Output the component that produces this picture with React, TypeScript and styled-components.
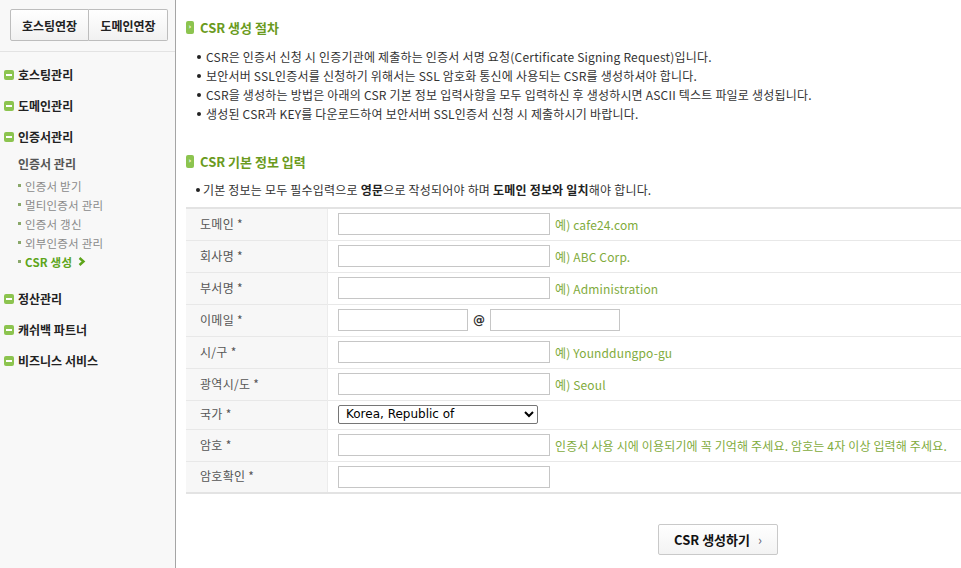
import React, { FC } from 'react';
import styled, { createGlobalStyle } from 'styled-components';

const GlobalStyle = createGlobalStyle`
    html, body { margin: 0; padding: 0; background: #fff; overflow: hidden; }
    body { font-family: "Noto Sans CJK KR", "Noto Sans", sans-serif; font-size: 12px; color: #333; }
`;

const Page = styled.div`
    display: flex;
    width: 1264px;
    height: 568px;
`;

const Sidebar = styled.aside`
    width: 175px;
    flex: none;
    background: #f8f8f8;
    border-right: 1px solid #a5a5a5;
`;

const TopButtons = styled.div`
    display: flex;
    padding: 9px 0 10px 10px;
    border-bottom: 1px solid #e3e3e3;
`;

const TopButton = styled.button`
    width: 79px;
    height: 32px;
    padding: 0;
    border: 1px solid #bdbdbd;
    background: linear-gradient(#ffffff, #f1f1f1);
    font: 700 12px "Noto Sans CJK KR", sans-serif;
    color: #222;
    &:first-child { border-radius: 2px 0 0 2px; }
    &:last-child { border-left: none; border-radius: 0 2px 2px 0; }
`;

const Menu = styled.ul<{ $first?: boolean }>`
    list-style: none;
    margin: 0;
    padding: ${p => (p.$first ? 7 : 0)}px 0 0 4px;
`;

const MenuItem = styled.li`
    height: 31px;
    display: flex;
    align-items: center;
    gap: 4px;
    font-weight: 700;
    font-size: 12px;
    color: #222;
`;

const MinusIcon = styled.i`
    width: 10px;
    height: 10px;
    border-radius: 2px;
    background: #8cc44f;
    display: flex;
    align-items: center;
    justify-content: center;
    &::after { content: ''; width: 6px; height: 2px; background: #fff; }
`;

const SubMenu = styled.div`
    padding: 2px 0 0 18px;
    margin-bottom: 12px;
`;

const SubTitle = styled.div`
    height: 22px;
    line-height: 20px;
    font-size: 12px;
    font-weight: 700;
    color: #555;
`;

const SubItem = styled.div<{ $active?: boolean }>`
    height: 19px;
    display: flex;
    align-items: center;
    gap: 4px;
    font-size: 11.5px;
    letter-spacing: 0.2px;
    font-weight: ${p => (p.$active ? 700 : 400)};
    color: ${p => (p.$active ? '#5da51a' : '#8a8a8a')};
    &::before { content: ''; width: 3px; height: 3px; background: #8aa86a; }
    svg { margin-left: 2px; }
`;

const Main = styled.main`
    flex: 1;
    padding: 17px 14px 0 10px;
`;

const Heading = styled.h3`
    display: flex;
    align-items: center;
    gap: 6px;
    margin: 0;
    height: 20px;
    font: 700 13px "Noto Sans CJK KR", sans-serif;
    color: #6a9a20;
`;

const HeadIcon = styled.i`
    width: 8px;
    height: 13px;
    border-radius: 2px;
    background: #8cc44f;
    color: #fff;
    font: 700 7px "DejaVu Sans", sans-serif;
    display: flex;
    align-items: center;
    justify-content: center;
    font-style: normal;
    &::after { content: '›'; }
`;

const Bullets = styled.ul<{ $note?: boolean }>`
    list-style: none;
    margin: ${p => (p.$note ? '9px 0 8px' : '10px 0 28px')};
    padding: 0 0 0 ${p => (p.$note ? 10 : 11)}px;
    li {
        position: relative;
        line-height: 19px;
        font-size: 12px;
        letter-spacing: 0.2px;
        color: #333;
        padding-left: ${p => (p.$note ? 7 : 9)}px;
    }
    li::before {
        content: '';
        position: absolute;
        left: 0;
        top: 8px;
        width: 4px;
        height: 4px;
        border-radius: 50%;
        background: #222;
    }
    b { color: #222; }
`;

const FormTable = styled.table`
    width: 100%;
    border-collapse: collapse;
    border-top: 2px solid #e3e3e3;
    border-bottom: 2px solid #e3e3e3;
`;

const Row = styled.tr<{ $short?: boolean }>`
    height: ${p => (p.$short ? 29 : 32)}px;
    & + & { border-top: 1px solid #e8e8e8; }
`;

const Label = styled.th`
    width: 127px;
    padding: 0 0 2px 14px;
    background: #f7f7f7;
    border-right: 1px solid #ececec;
    text-align: left;
    font-weight: 400;
    font-size: 12px;
    letter-spacing: 0.3px;
    color: #555;
    vertical-align: middle;
`;

const Field = styled.td`
    padding: 0 0 0 10px;
    vertical-align: middle;
`;

const FieldLine = styled.div`
    display: flex;
    align-items: center;
    gap: 5px;
`;

const TextInput = styled.input<{ $w?: number }>`
    box-sizing: border-box;
    width: ${p => p.$w ?? 212}px;
    height: 22px;
    margin: 0;
    border: 1px solid #c6c6c6;
    padding: 0 4px;
    background: #fff;
`;

const At = styled.span`
    font: 700 12px "DejaVu Sans", sans-serif;
    color: #333;
`;

const Hint = styled.span`
    font-size: 12px;
    letter-spacing: 0.15px;
    color: #7fab3c;
    white-space: nowrap;
`;

const Select = styled.select`
    box-sizing: border-box;
    width: 200px;
    height: 19px;
    margin: 0 0 1px;
    border: 1px solid #767676;
    border-radius: 2px;
    padding: 0 0 0 3px;
    font: 12px "DejaVu Sans", sans-serif;
    color: #000;
    background: #fff;
`;

const Actions = styled.div`
    display: flex;
    justify-content: center;
    padding-top: 30px;
`;

const SubmitButton = styled.button`
    width: 120px;
    height: 31px;
    border: 1px solid #c9c9c9;
    border-radius: 2px;
    background: linear-gradient(#ffffff, #f3f3f3);
    font: 700 13px "Noto Sans CJK KR", sans-serif;
    color: #111;
    span { color: #667; font-weight: 400; margin-left: 8px; }
`;

const Chevron: FC = () => (
    <svg width="8" height="9" viewBox="0 0 8 9">
        <path d="M1.5 1 L5.5 4.5 L1.5 8" stroke="#5da51a" strokeWidth="2.4" fill="none" />
    </svg>
);

const rows: { label: string; hint?: string }[] = [
    { label: '도메인 *', hint: '예) cafe24.com' },
    { label: '회사명 *', hint: '예) ABC Corp.' },
    { label: '부서명 *', hint: '예) Administration' },
];

const rows2: { label: string; hint?: string }[] = [
    { label: '시/구 *', hint: '예) Younddungpo-gu' },
    { label: '광역시/도 *', hint: '예) Seoul' },
];

export default function App() {
    return (
        <Page>
            <GlobalStyle />
            <Sidebar>
                <TopButtons>
                    <TopButton>호스팅연장</TopButton>
                    <TopButton>도메인연장</TopButton>
                </TopButtons>
                <Menu $first>
                    <MenuItem><MinusIcon />호스팅관리</MenuItem>
                    <MenuItem><MinusIcon />도메인관리</MenuItem>
                    <MenuItem><MinusIcon />인증서관리</MenuItem>
                </Menu>
                <SubMenu>
                    <SubTitle>인증서 관리</SubTitle>
                    <SubItem>인증서 받기</SubItem>
                    <SubItem>멀티인증서 관리</SubItem>
                    <SubItem>인증서 갱신</SubItem>
                    <SubItem>외부인증서 관리</SubItem>
                    <SubItem $active>CSR 생성<Chevron /></SubItem>
                </SubMenu>
                <Menu>
                    <MenuItem><MinusIcon />정산관리</MenuItem>
                    <MenuItem><MinusIcon />캐쉬백 파트너</MenuItem>
                    <MenuItem><MinusIcon />비즈니스 서비스</MenuItem>
                </Menu>
            </Sidebar>

            <Main>
                <Heading><HeadIcon />CSR 생성 절차</Heading>
                <Bullets>
                    <li>CSR은 인증서 신청 시 인증기관에 제출하는 인증서 서명 요청(Certificate Signing Request)입니다.</li>
                    <li>보안서버 SSL인증서를 신청하기 위해서는 SSL 암호화 통신에 사용되는 CSR를 생성하셔야 합니다.</li>
                    <li>CSR을 생성하는 방법은 아래의 CSR 기본 정보 입력사항을 모두 입력하신 후 생성하시면 ASCII 텍스트 파일로 생성됩니다.</li>
                    <li>생성된 CSR과 KEY를 다운로드하여 보안서버 SSL인증서 신청 시 제출하시기 바랍니다.</li>
                </Bullets>

                <Heading><HeadIcon />CSR 기본 정보 입력</Heading>
                <Bullets $note>
                    <li>기본 정보는 모두 필수입력으로 <b>영문</b>으로 작성되어야 하며 <b>도메인 정보와 일치</b>해야 합니다.</li>
                </Bullets>

                <FormTable>
                    <tbody>
                        {rows.map(r => (
                            <Row key={r.label}>
                                <Label>{r.label}</Label>
                                <Field><FieldLine><TextInput /><Hint>{r.hint}</Hint></FieldLine></Field>
                            </Row>
                        ))}
                        <Row>
                            <Label>이메일 *</Label>
                            <Field><FieldLine><TextInput $w={130} /><At>@</At><TextInput $w={130} /></FieldLine></Field>
                        </Row>
                        {rows2.map(r => (
                            <Row key={r.label}>
                                <Label>{r.label}</Label>
                                <Field><FieldLine><TextInput /><Hint>{r.hint}</Hint></FieldLine></Field>
                            </Row>
                        ))}
                        <Row $short>
                            <Label>국가 *</Label>
                            <Field>
                                <Select defaultValue="KR">
                                    <option value="KR">Korea, Republic of</option>
                                </Select>
                            </Field>
                        </Row>
                        <Row>
                            <Label>암호 *</Label>
                            <Field><FieldLine><TextInput type="password" /><Hint>인증서 사용 시에 이용되기에 꼭 기억해 주세요. 암호는 4자 이상 입력해 주세요.</Hint></FieldLine></Field>
                        </Row>
                        <Row>
                            <Label>암호확인 *</Label>
                            <Field><FieldLine><TextInput type="password" /></FieldLine></Field>
                        </Row>
                    </tbody>
                </FormTable>

                <Actions>
                    <SubmitButton>CSR 생성하기<span>›</span></SubmitButton>
                </Actions>
            </Main>
        </Page>
    );
}
